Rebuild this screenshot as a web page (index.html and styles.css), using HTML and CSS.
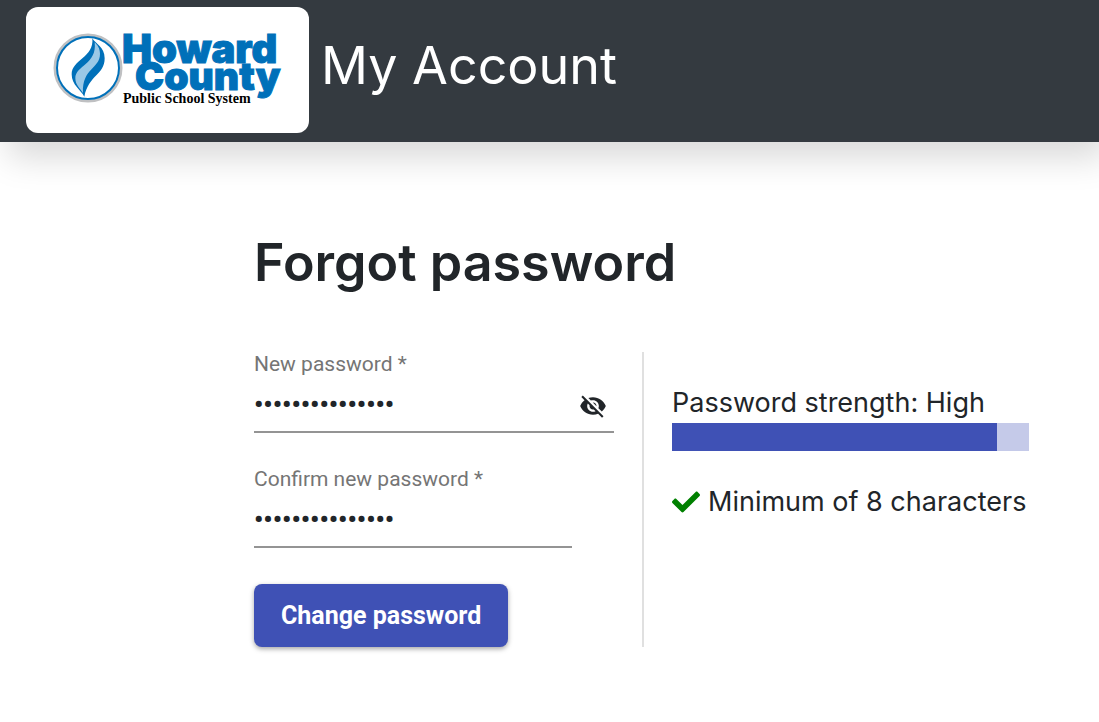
FILE: index.html
```html
<!DOCTYPE html>
<html lang="en">
<head>
<meta charset="utf-8">
<meta name="viewport" content="width=device-width, initial-scale=1">
<title>My Account</title>
<link rel="stylesheet" href="styles.css">
</head>
<body>
<header class="topbar">
  <a class="logo" href="#" aria-label="Howard County Public School System">
    <svg class="logo-art" viewBox="0 0 283 126" aria-hidden="true">
      <circle cx="62" cy="61" r="33" fill="#fff" stroke="#bfc0c2" stroke-width="3"/>
      <circle cx="62" cy="61" r="31" fill="#fff" stroke="#0070b9" stroke-width="2"/>
      <g transform="translate(14 18) scale(.3333)">
        <path fill="#0070b9" d="M157 40C166 56 194 66 194 100C194 150 146 150 133 215C122 194 95 180 95 148C95 104 163 98 157 40Z"/>
        <path fill="#9bc8e6" d="M164 52C172 60 180 70 180 86C180 132 126 128 129 204C120 190 106 180 106 160C106 122 172 118 164 52Z"/>
      </g>
      <text class="logo-name" x="96" y="56">Howard</text>
      <text class="logo-name logo-name-low" x="109" y="83">County</text>
      <text class="logo-tag" x="97" y="96">Public School System</text>
    </svg>
  </a>
  <span class="app-name">My Account</span>
</header>
<main class="page">
  <h1 class="title">Forgot password</h1>
  <div class="columns">
    <form class="form">
      <div class="field">
        <label class="label" for="new-password">New password *</label>
        <div class="control">
          <input class="input" id="new-password" type="password" value="abcdefgh1234567" required>
          <button class="toggle" type="button" aria-label="Show password">
            <svg class="eye" viewBox="0 0 24 24" aria-hidden="true"><path d="M12 7c2.76 0 5 2.24 5 5 0 .65-.13 1.26-.36 1.83l2.92 2.92c1.51-1.26 2.7-2.89 3.43-4.75-1.73-4.39-6-7.5-11-7.5-1.4 0-2.74.25-3.98.7l2.16 2.16C10.74 7.13 11.35 7 12 7zM2 4.27l2.28 2.28.46.46C3.08 8.3 1.78 10.02 1 12c1.73 4.39 6 7.5 11 7.5 1.55 0 3.03-.3 4.38-.84l.42.42L19.73 22 21 20.73 3.27 3 2 4.27zM7.53 9.8l1.55 1.55c-.05.21-.08.43-.08.65 0 1.66 1.34 3 3 3 .22 0 .44-.03.65-.08l1.55 1.55c-.67.33-1.41.53-2.2.53-2.76 0-5-2.24-5-5 0-.79.2-1.53.53-2.2zm4.31-.78l3.15 3.15.02-.16c0-1.66-1.34-3-3-3l-.17.01z"/></svg>
          </button>
        </div>
      </div>
      <div class="field field-short">
        <label class="label" for="confirm-password">Confirm new password *</label>
        <div class="control">
          <input class="input" id="confirm-password" type="password" value="abcdefgh1234567" required>
        </div>
      </div>
      <button class="submit" type="submit">Change password</button>
    </form>
    <section class="strength">
      <div id="strength-label">Password strength: High</div>
      <div class="meter" role="progressbar" aria-labelledby="strength-label" aria-valuenow="91" aria-valuemin="0" aria-valuemax="100">
        <div class="meter-fill" style="width: 91%"></div>
      </div>
      <div class="rule">
        <svg class="check" viewBox="0 0 512 512" aria-hidden="true"><path d="M173.898 439.404l-166.4-166.4c-9.997-9.997-9.997-26.206 0-36.204l36.203-36.204c9.997-9.998 26.207-9.998 36.204 0L192 312.69 432.095 72.596c9.997-9.997 26.207-9.997 36.204 0l36.203 36.204c9.997 9.997 9.997 26.206 0 36.204l-294.4 294.401c-9.998 9.997-26.207 9.997-36.204-.001z"/></svg>
        <span>Minimum of 8 characters</span>
      </div>
    </section>
  </div>
</main>
</body>
</html>
```
FILE: styles.css
```css
* { box-sizing: border-box; }

body {
  margin: 0;
  background: #fff;
  color: #212529;
  font-family: Inter, "Liberation Sans", sans-serif;
}

.topbar {
  display: flex;
  align-items: center;
  gap: 12px;
  padding: 7px 26px 9px;
  background: #343a40;
  box-shadow: 8px 16px 32px rgba(0, 0, 0, .15);
}

.logo {
  flex: none;
  display: block;
  width: 283px;
  border-radius: 12px;
  background: #fff;
}

.logo-art { display: block; width: 100%; }

.logo-name {
  fill: #0070b9;
  stroke: #0070b9;
  stroke-width: 1px;
  font-family: Inter, sans-serif;
  font-size: 40px;
  font-weight: 900;
}

.logo-name-low { font-size: 39px; }

.logo-tag {
  fill: #000;
  font-family: "Liberation Serif", serif;
  font-size: 14px;
  font-weight: 700;
}

.app-name {
  color: #fff;
  font-size: 52px;
  line-height: 64px;
  white-space: nowrap;
  padding-bottom: 8px;
}

.page { padding: 88px 70px 72px 254px; }

.title {
  margin: 0 0 56px;
  font-size: 52px;
  font-weight: 600;
  line-height: 66px;
}

.columns {
  display: grid;
  grid-template-columns: minmax(0, 390fr) minmax(0, 385fr);
}

.form {
  padding-right: 28px;
  border-right: 2px solid #e0e0e0;
}

.field { margin-bottom: 34px; }
.field-short { width: 318px; max-width: 100%; margin-bottom: 36px; }

.label {
  display: block;
  color: #757575;
  font: 21px/25px Roboto, sans-serif;
}

.control {
  display: flex;
  align-items: center;
  height: 56px;
  border-bottom: 2px solid #949494;
}

.input {
  flex: 1;
  min-width: 0;
  padding: 0;
  border: 0;
  outline: 0;
  background: none;
  color: #212529;
  font: 700 26px/32px Roboto, sans-serif;
}

.toggle {
  padding: 4px 7px 0;
  border: 0;
  background: none;
  color: #212529;
}

.eye { display: block; width: 28px; fill: currentColor; }

.submit {
  height: 63px;
  padding: 0 27px;
  border: 0;
  border-radius: 8px;
  background: #3f51b5;
  color: #fff;
  font: 700 25px/32px Roboto, sans-serif;
  box-shadow: 0 2px 5px rgba(0, 0, 0, .35);
}

.strength {
  padding: 30px 0 0 28px;
  font-size: 27px;
  line-height: 41px;
  white-space: nowrap;
}

.meter { height: 28px; background: #c5cae9; }
.meter-fill { height: 100%; background: #3f51b5; }

.rule {
  display: flex;
  align-items: center;
  gap: 8px;
  margin-top: 30px;
}

.check { flex: none; width: 28px; fill: green; }
```
